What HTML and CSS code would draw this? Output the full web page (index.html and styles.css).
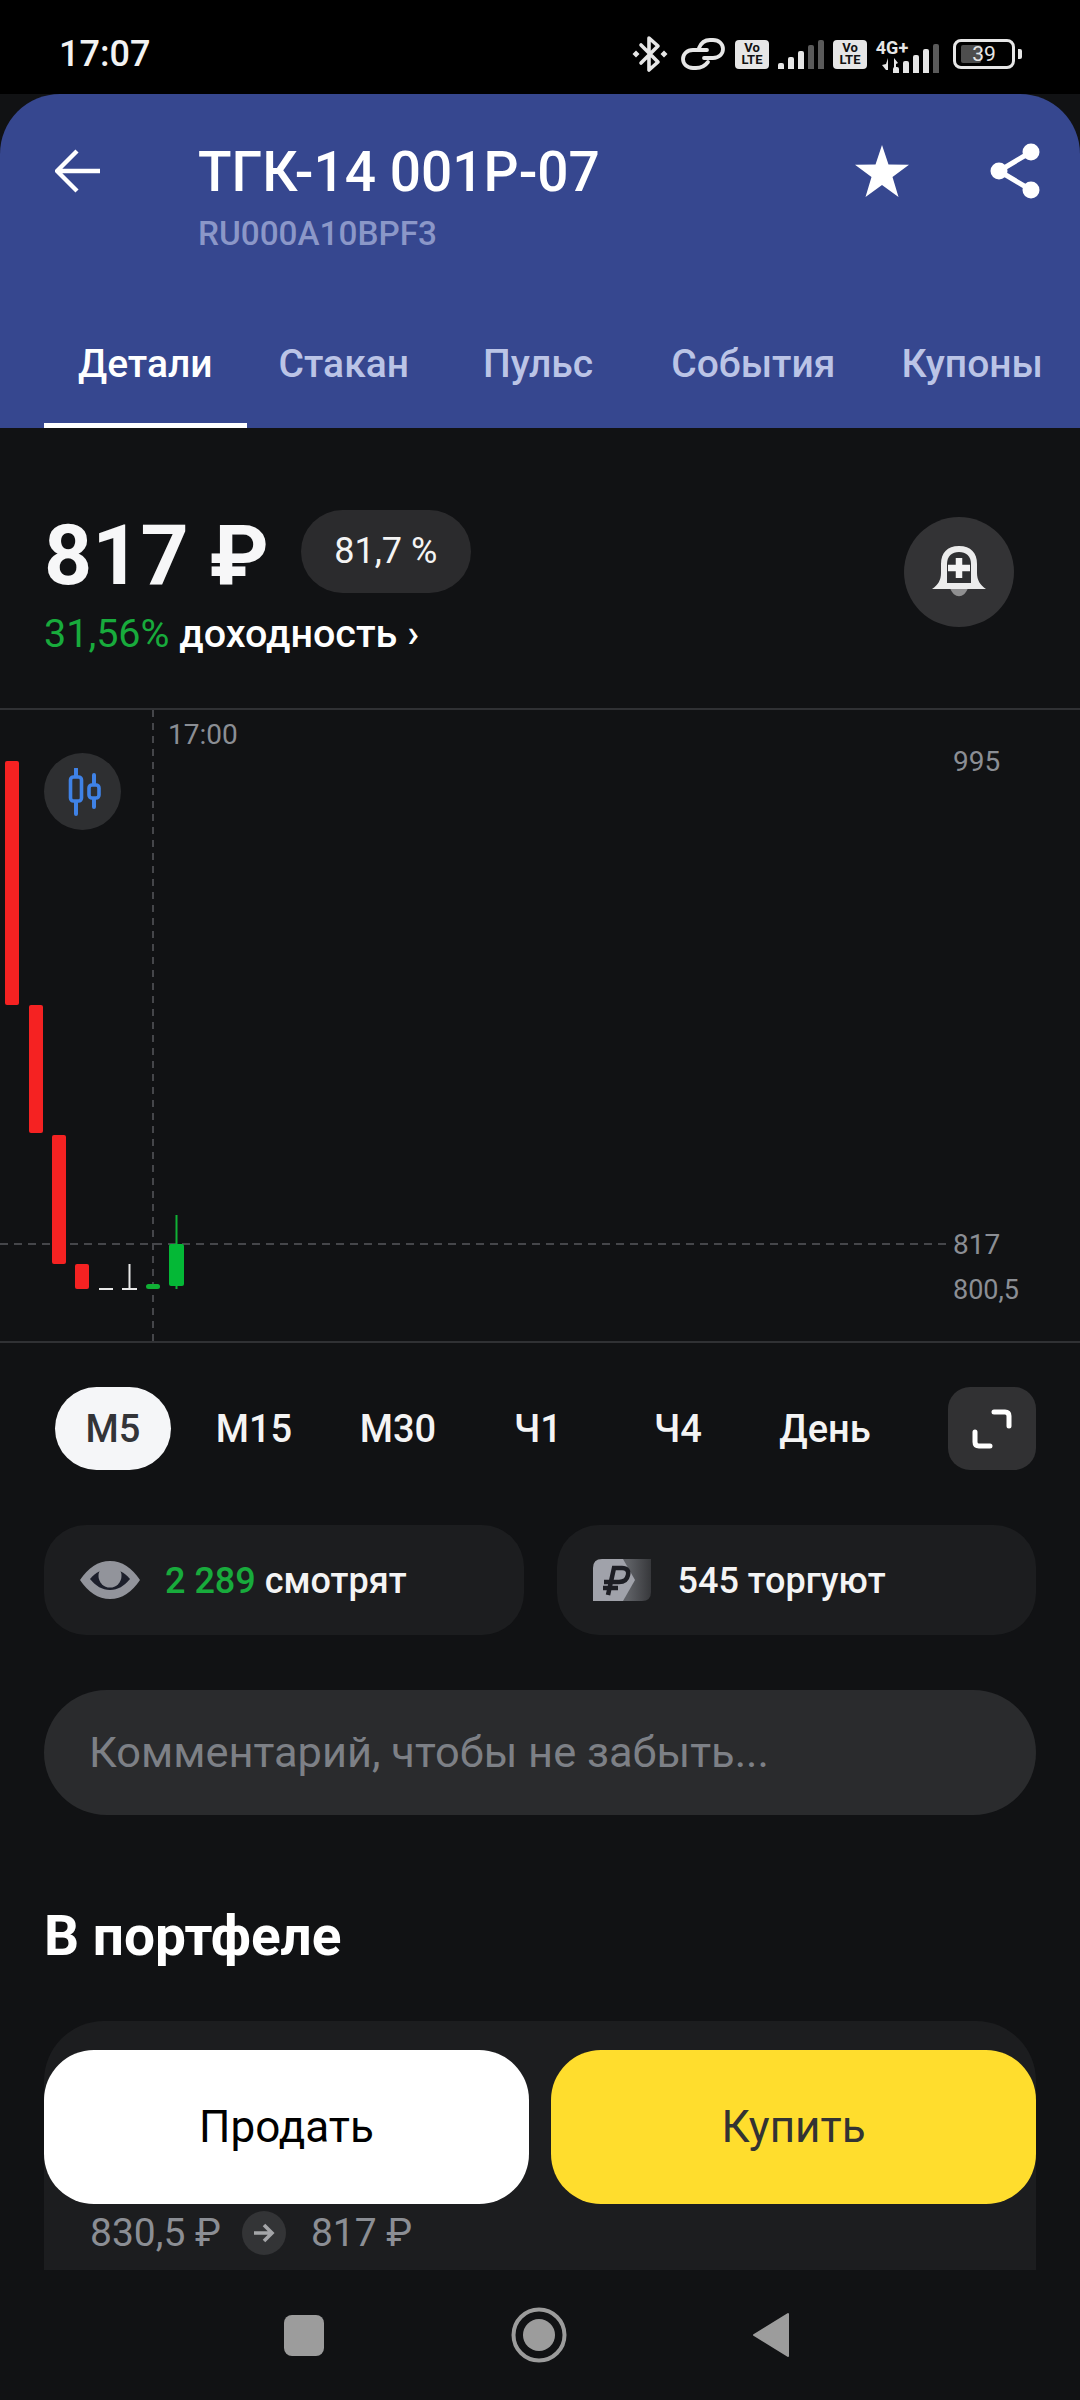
FILE: index.html
```html
<!DOCTYPE html>
<html lang="ru">

<head>
    <meta charset="UTF-8">
    <meta name="viewport" content="width=device-width, initial-scale=1.0">
    <title>ТГК-14 001Р-07</title>
    <link rel="stylesheet" href="styles.css">
</head>

<body>
    <div class="phone">
        <div class="statusbar">
            <span class="clock">17:07</span>
            <div class="status-icons">
                <svg class="ic-bt" viewBox="0 0 36 38" width="36" height="38">
                    <path d="M9 10 L26 27 L17 35 V3 L26 11 L9 28" fill="none" stroke="#e6e6e6" stroke-width="3.6" stroke-linejoin="round" stroke-linecap="round" />
                    <path d="M0.5 19 L4 15.5 L7.5 19 L4 22.5Z M28.5 19 L32 15.5 L35.5 19 L32 22.500Z" fill="#e6e6e6" />
                </svg>
                <svg class="ic-link" viewBox="0 0 44 33" width="44" height="33">
                    <path d="M18 10 C20 5 24 2 29 2 H32 C38 2 42 6 42 11 C42 16 38 20 32 20 H23" fill="none" stroke="#e6e6e6" stroke-width="3.8" stroke-linecap="round" />
                    <path d="M26 12 H12 C6 12 2 16 2 21 C2 26 6 30 12 30 H15 C20 30 24 28 27 24" fill="none" stroke="#e6e6e6" stroke-width="3.8" stroke-linecap="round" />
                </svg>
                <span class="volte"><span>Vo</span><span>LTE</span></span>
                <div class="bars">
                    <i class="b1"></i><i class="b2"></i><i class="b3"></i><i class="b4 dim"></i><i class="b5 dim"></i>
                </div>
                <span class="volte second"><span>Vo</span><span>LTE</span></span>
                <div class="net">
                    <span class="net-label">4G+</span>
                    <svg viewBox="0 0 20 12" width="20" height="12">
                        <path d="M6 0 V12 H4 L0 7 L4 6Z M12 0 L16 5 L14 6 V12 H12Z" fill="#e6e6e6" />
                    </svg>
                </div>
                <div class="bars">
                    <i class="b1"></i><i class="b2"></i><i class="b3"></i><i class="b4"></i><i class="b5 dim"></i>
                </div>
                <div class="battery">
                    <div class="battery-body"><i class="battery-fill"></i><span class="battery-num">39</span></div>
                    <i class="battery-nub"></i>
                </div>
            </div>
        </div>

        <header class="topbar">
            <div class="title-row">
                <svg class="back" viewBox="0 0 46 44" width="46" height="44">
                    <path d="M45 22 H3 M22 2 L2 22 L22 42" fill="none" stroke="#fff" stroke-width="4.4" />
                </svg>
                <div class="title-block">
                    <h1>ТГК-14 001Р-07</h1>
                    <div class="isin">RU000A10BPF3</div>
                </div>
                <svg class="star" viewBox="0 0 54 52" width="54" height="52">
                    <path d="M27 0 L33.5 19.5 L54 19.8 L37.5 32 L43.5 52 L27 40 L10.5 52 L16.5 32 L0 19.8 L20.5 19.5Z" fill="#fff" />
                </svg>
                <svg class="share" viewBox="0 0 50 56" width="50" height="56">
                    <path d="M41 9 L9 28 L41 47" fill="none" stroke="#fff" stroke-width="5" />
                    <circle cx="41" cy="9" r="8.5" fill="#fff" />
                    <circle cx="9" cy="28" r="8.5" fill="#fff" />
                    <circle cx="41" cy="47" r="8.5" fill="#fff" />
                </svg>
            </div>
            <nav class="tabs">
                <a class="tab active">Детали</a>
                <a class="tab">Стакан</a>
                <a class="tab">Пульс</a>
                <a class="tab">События</a>
                <a class="tab">Купоны</a>
            </nav>
        </header>

        <section class="price-block">
            <div class="price-left">
                <div class="price-row">
                    <span class="price">817 ₽</span>
                    <span class="percent">81,7 %</span>
                </div>
                <div class="yield"><span class="green">31,56%</span> доходность ›</div>
            </div>
            <div class="bell">
                <svg viewBox="0 0 54 54" width="54" height="54">
                    <path d="M18 43 C22 54 32 54 36 43Z" fill="#8f8f90" />
                    <path d="M0 44 C6 40 9 35 9 28 V19 C9 8 15 1 27 1 C39 1 45 8 45 19 V28 C45 35 48 40 54 44Z" fill="#ececec" />
                    <path d="M15 38 V19 C15 11 20 7 27 7 C34 7 39 11 39 19 V38Z" fill="#2f3032" />
                    <path d="M27 13 V33 M16 23 H38" stroke="#f4f4f4" stroke-width="6.500" />
                </svg>
            </div>
        </section>

        <section class="chart">
            <svg class="plot" viewBox="0 0 1080 631" width="1080" height="631">
                <path d="M153 0 V631" stroke="#45464a" stroke-width="2" stroke-dasharray="7 6" />
                <path d="M0 534 H946" stroke="#45464a" stroke-width="2" stroke-dasharray="8 6" />
                <rect x="5" y="51" width="14" height="244" rx="2" fill="#f52222" />
                <rect x="29" y="295" width="14" height="128" rx="2" fill="#f52222" />
                <rect x="52" y="425" width="14" height="129" rx="2" fill="#f52222" />
                <rect x="75" y="554" width="14" height="25" rx="2" fill="#f52222" />
                <path d="M99 579 H113 M122 579 H137 M129.500 554 V579" stroke="#e8e8e8" stroke-width="2" />
                <rect x="146" y="574" width="14" height="5" rx="2.500" fill="#10b035" />
                <path d="M176.500 505 V579" stroke="#10b035" stroke-width="2" />
                <rect x="169" y="534" width="15" height="42" rx="2" fill="#04b836" />
            </svg>
            <span class="axis-time">17:00</span>
            <span class="axis-price p995">995</span>
            <span class="axis-price p817">817</span>
            <span class="axis-price p800">800,5</span>
            <div class="chart-type">
                <svg viewBox="0 0 36 48" width="36" height="48">
                    <path d="M11 1 V46 M29 7 V39" stroke="#3f82e6" stroke-width="4" stroke-linecap="round" />
                    <rect x="5.500" y="9" width="11" height="24" rx="3" fill="#2e2f31" stroke="#3f82e6" stroke-width="3.600" />
                    <rect x="24" y="17" width="10" height="13" rx="3" fill="#2e2f31" stroke="#3f82e6" stroke-width="3.600" />
                </svg>
            </div>
        </section>

        <div class="periods">
            <span class="period active">М5</span>
            <span class="period">М15</span>
            <span class="period">М30</span>
            <span class="period">Ч1</span>
            <span class="period">Ч4</span>
            <span class="period">День</span>
            <div class="expand">
                <svg viewBox="0 0 40 40" width="40" height="40">
                    <path d="M22 3 H33 Q37 3 37 7 V17 M3 23 V33 Q3 37 7 37 H18" fill="none" stroke="#fff" stroke-width="5" stroke-linecap="round" />
                </svg>
            </div>
        </div>

        <div class="stats">
            <div class="stat">
                <svg class="eye" viewBox="0 0 60 38" width="60" height="38">
                    <path d="M0 19 C8 7 18 0 30 0 C42 0 52 7 60 19 C52 31 42 38 30 38 C18 38 8 31 0 19Z" fill="#92949b" />
                    <path d="M10 18 C16 11 22 8 30 8 C38 8 44 11 50 18 C44 25 38 29 30 29 C22 29 16 25 10 18Z" fill="#1c1f2b" />
                    <circle cx="30" cy="15" r="11.500" fill="#92949b" />
                </svg>
                <span class="stat-text stat-eye"><span class="green">2 289</span> смотрят</span>
            </div>
            <div class="stat">
                <svg class="coin" viewBox="0 0 58 42" width="58" height="42">
                    <defs>
                        <linearGradient id="coinBack" x1="0" x2="1" y1="0" y2="0">
                            <stop offset="0.4" stop-color="#5e6065" />
                            <stop offset="1" stop-color="#37383b" />
                        </linearGradient>
                    </defs>
                    <path d="M20 0 H58 V33 Q58 42 49 42 H20Z" fill="url(#coinBack)" />
                    <path d="M0 9 Q0 0 9 0 H30 L42 21 L30 42 H0Z" fill="#a0a2aa" />
                    <path d="M15 36 L21 9 H29 C34 9 36 12 35 16 C34 21 30 23 26 23 H11 M10 29 H25" fill="none" stroke="#1d1e24" stroke-width="4.500" />
                </svg>
                <span class="stat-text">545 торгуют</span>
            </div>
        </div>

        <div class="comment">Комментарий, чтобы не забыть...</div>

        <h2 class="section-title">В портфеле</h2>

        <div class="portfolio">
            <div class="change">
                <span>830,5 ₽</span>
                <span class="change-arrow">
                    <svg viewBox="0 0 22 20" width="22" height="20">
                        <path d="M1 10 H19 M11 2 L19 10 L11 18" fill="none" stroke="#a4a5a8" stroke-width="3.600" />
                    </svg>
                </span>
                <span>817 ₽</span>
            </div>
        </div>

        <div class="actions">
            <button class="btn sell">Продать</button>
            <button class="btn buy">Купить</button>
        </div>

        <div class="navbar">
            <i class="nav-square"></i>
            <svg viewBox="0 0 56 56" width="56" height="56">
                <circle cx="28" cy="28" r="25.500" fill="none" stroke="#9c9c9c" stroke-width="4" />
                <circle cx="28" cy="28" r="16" fill="#9c9c9c" />
            </svg>
            <svg viewBox="0 0 38 46" width="38" height="46">
                <path d="M36 2 V44 L2 23Z" fill="#9c9c9c" stroke="#9c9c9c" stroke-width="2" stroke-linejoin="round" />
            </svg>
        </div>
    </div>
</body>

</html>
```

FILE: styles.css
```css
* {
    box-sizing: border-box;
}

html,
body {
    margin: 0;
    padding: 0;
    background: #111214;
}

body {
    font-family: Roboto, "Liberation Sans", sans-serif;
    color: #fff;
}

.phone {
    position: relative;
    width: 1080px;
    height: 2400px;
    overflow: hidden;
    background: #111214;
}

.green {
    color: #18ab3c;
}

/* status bar */
.statusbar {
    height: 94px;
    background: #000;
    display: flex;
    align-items: center;
    justify-content: space-between;
    padding: 14px 58px 0 59px;
}

.clock {
    font-size: 36px;
    font-weight: 500;
    color: #f2f2f2;
}

.status-icons {
    display: flex;
    align-items: center;
}

.ic-link {
    margin-left: 13px;
}

.volte {
    width: 34px;
    height: 29px;
    margin-left: 10px;
    border-radius: 4px;
    background: #e6e6e6;
    color: #111;
    font-size: 13px;
    font-weight: 700;
    line-height: 12.500px;
    display: flex;
    flex-direction: column;
    align-items: center;
    justify-content: center;
}

.volte.second {
    margin-left: 9px;
}

.bars {
    display: flex;
    align-items: flex-end;
    gap: 4px;
    height: 29px;
    margin-left: 9px;
}

.bars i {
    display: block;
    width: 6px;
    background: #e6e6e6;
    border-radius: 2px 2px 0 0;
}

.bars .dim {
    background: #5a5a5a;
}

.b1 { height: 6px; }
.b2 { height: 12px; }
.b3 { height: 18px; }
.b4 { height: 24px; }
.b5 { height: 29px; }

.net {
    display: flex;
    flex-direction: column;
    align-items: center;
    margin-left: 7px;
    width: 36px;
    gap: 2px;
}

.net-label {
    font-size: 18px;
    font-weight: 700;
    line-height: 17px;
    color: #e6e6e6;
}

.net + .bars {
    margin-left: -17px;
    align-self: flex-end;
}

.battery {
    display: flex;
    align-items: center;
    margin-left: 14px;
    gap: 3px;
}

.battery-body {
    position: relative;
    width: 62px;
    height: 30px;
    border: 3px solid #e6e6e6;
    border-radius: 8px;
    display: flex;
    align-items: center;
    justify-content: center;
}

.battery-fill {
    position: absolute;
    left: 5px;
    top: 3px;
    bottom: 3px;
    width: 20px;
    background: #4d4d4d;
    border-radius: 2px;
}

.battery-num {
    position: relative;
    font-size: 21px;
    color: #e6e6e6;
    line-height: 1;
}

.battery-nub {
    display: block;
    width: 4px;
    height: 10px;
    background: #e6e6e6;
    border-radius: 0 2px 2px 0;
}

/* header */
.topbar {
    height: 334px;
    background: #36478f;
    border-radius: 60px 60px 0 0;
    display: flex;
    flex-direction: column;
    justify-content: space-between;
}

.title-row {
    display: flex;
    align-items: flex-start;
    padding: 49px 40px 0 55px;
}

.back {
    margin-top: 6px;
}

.title-block {
    margin-left: 97px;
    flex: 1;
}

h1 {
    margin: 0;
    font-size: 55px;
    font-weight: 500;
    line-height: 58px;
}

.isin {
    margin-top: 14px;
    font-size: 33.300px;
    font-weight: 500;
    line-height: 38px;
    color: #8b97c8;
}

.star {
    margin-top: 2px;
}

.share {
    margin-left: 81px;
}

.tabs {
    display: flex;
    padding-left: 44px;
    white-space: nowrap;
}

.tab {
    padding: 0 34px 34px;
    font-size: 39px;
    font-weight: 500;
    line-height: 50px;
    color: #bbc4e6;
    border-bottom: 5px solid transparent;
}

.tab:nth-child(2) { margin-left: -2px; }
.tab:nth-child(3) { margin-left: 6px; }
.tab:nth-child(4) { margin-left: 10px; }
.tab:nth-child(5) { margin-left: -2px; }

.tab.active {
    color: #fff;
    border-bottom-color: #fff;
}

/* price */
.price-block {
    height: 282px;
    padding: 84px 66px 0 44px;
    display: flex;
    justify-content: space-between;
    align-items: flex-start;
    border-bottom: 2px solid #303134;
}

.price-row {
    display: flex;
    align-items: center;
    gap: 32px;
}

.price {
    font-size: 84px;
    font-weight: 700;
    line-height: 88px;
    color: #f7f7f8;
}

.percent {
    width: 170px;
    height: 83px;
    margin-top: -10px;
    border-radius: 42px;
    background: #2b2b2d;
    font-size: 36px;
    display: flex;
    align-items: center;
    justify-content: center;
    color: #f4f4f4;
}

.yield {
    margin-top: 9px;
    font-size: 39.500px;
    font-weight: 500;
    line-height: 50px;
}

.yield .green {
    font-weight: 400;
}

.bell {
    width: 110px;
    height: 110px;
    margin-top: 5px;
    border-radius: 50%;
    background: #333335;
    display: flex;
    align-items: center;
    justify-content: center;
}

/* chart */
.chart {
    position: relative;
    height: 633px;
    border-bottom: 2px solid #303134;
}

.plot {
    display: block;
}

.axis-time,
.axis-price {
    position: absolute;
    font-size: 28px;
    line-height: 32px;
    color: #8b8e94;
}

.axis-time {
    left: 168px;
    top: 9px;
}

.axis-price {
    left: 953px;
}

.p995 { top: 36px; }
.p817 { top: 519px; }
.p800 { top: 564px; font-size: 27px; }

.chart-type {
    position: absolute;
    left: 44px;
    top: 43px;
    width: 77px;
    height: 77px;
    border-radius: 50%;
    background: #2e2f31;
    display: flex;
    align-items: center;
    justify-content: center;
}

/* period switch */
.periods {
    position: relative;
    height: 83px;
    margin-top: 44px;
    font-size: 38px;
    font-weight: 500;
    color: #f4f4f4;
}

.period {
    position: absolute;
    top: 0;
    height: 83px;
    line-height: 85px;
    text-align: center;
}

.period:nth-child(1) { left: 55px; width: 116px; }
.period:nth-child(2) { left: 206px; width: 96px; }
.period:nth-child(3) { left: 350px; width: 96px; }
.period:nth-child(4) { left: 490px; width: 96px; }
.period:nth-child(5) { left: 630px; width: 96px; }
.period:nth-child(6) { left: 770px; width: 110px; }

.period.active {
    background: #f5f6f8;
    color: #333438;
    border-radius: 42px;
}

.expand {
    position: absolute;
    left: 948px;
    top: 0;
    width: 88px;
    height: 83px;
    border-radius: 22px;
    background: #313133;
    display: flex;
    align-items: center;
    justify-content: center;
}

/* watching / trading */
.stats {
    display: flex;
    gap: 33px;
    margin: 55px 44px 0;
}

.stat {
    flex: 1;
    height: 110px;
    padding-left: 36px;
    border-radius: 42px;
    background: #1c1d1f;
    display: flex;
    align-items: center;
    font-size: 36px;
    font-weight: 500;
}

.stat-text {
    margin-left: 27px;
    padding-top: 2px;
    color: #f4f4f4;
}

.stat-eye {
    margin-left: 25px;
}

.comment {
    height: 125px;
    margin: 55px 44px 0;
    padding: 0 45px;
    border-radius: 63px;
    background: #2a2b2d;
    color: #7d8086;
    font-size: 43.400px;
    line-height: 125px;
}

.section-title {
    margin: 88px 44px 0;
    font-size: 55px;
    font-weight: 700;
    line-height: 66px;
}

.portfolio {
    height: 251px;
    margin: 52px 44px 0;
    padding: 190px 46px 0;
    background: #1c1d1f;
    border-radius: 60px 60px 0 0;
}

.change {
    display: flex;
    align-items: center;
    gap: 21px;
    height: 44px;
    font-size: 39px;
    color: #8b8e94;
}

.change-arrow {
    width: 44px;
    height: 44px;
    margin-right: 4px;
    border-radius: 50%;
    background: #333436;
    display: flex;
    align-items: center;
    justify-content: center;
}

/* bottom buttons sit over the card */
.actions {
    position: absolute;
    left: 44px;
    right: 44px;
    top: 2050px;
    display: flex;
    gap: 22px;
}

.btn {
    flex: 1;
    height: 154px;
    border: none;
    border-radius: 50px;
    font-family: inherit;
    font-size: 44px;
    color: #000;
}

.sell {
    background: #fff;
}

.buy {
    background: #ffdd2d;
    color: #333;
}

.navbar {
    position: absolute;
    left: 0;
    right: 0;
    bottom: 0;
    height: 130px;
    background: #111214;
    display: flex;
    align-items: center;
    padding: 0 0 0 284px;
}

.nav-square {
    display: block;
    width: 40px;
    height: 41px;
    border-radius: 8px;
    background: #9c9c9c;
}

.navbar svg:nth-child(2) {
    margin-left: 187px;
}

.navbar svg:nth-child(3) {
    margin-left: 185px;
}
```
